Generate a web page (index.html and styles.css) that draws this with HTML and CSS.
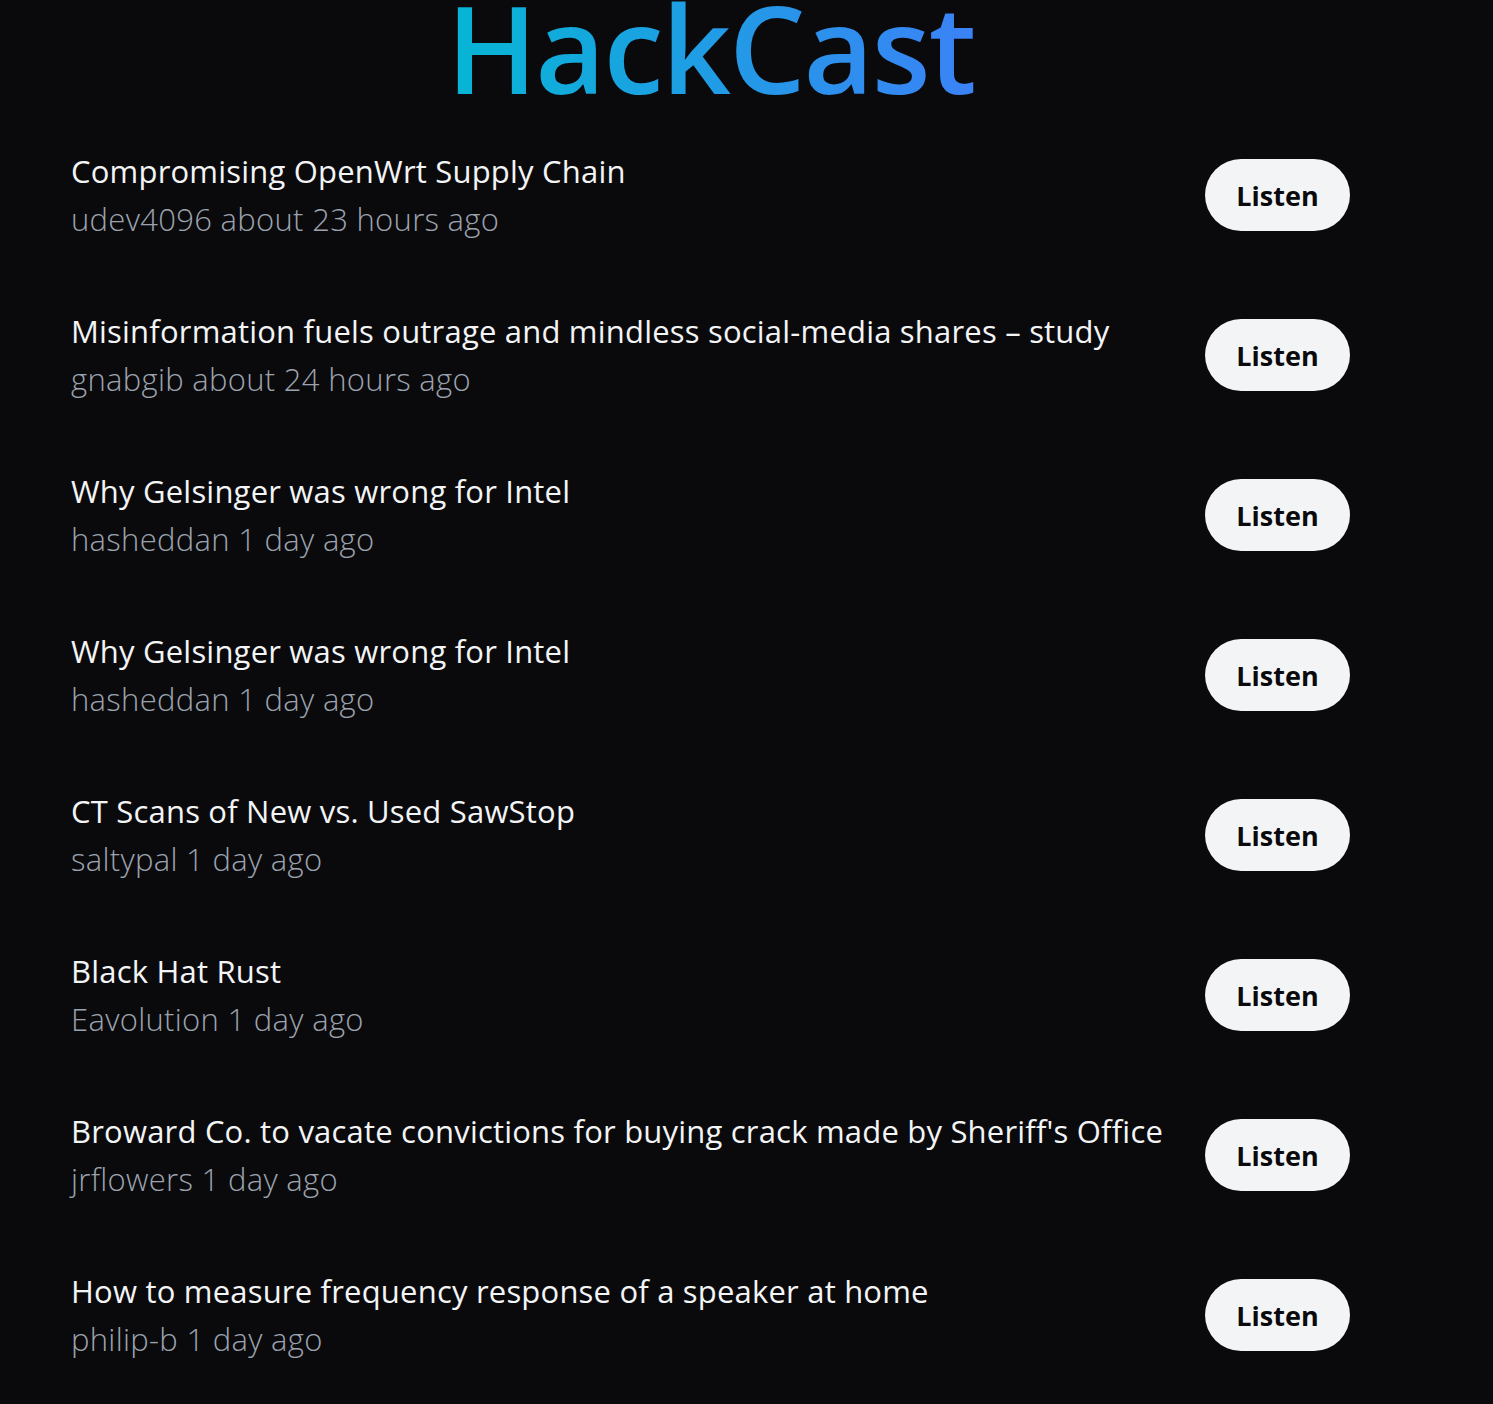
FILE: index.html
```html
<!DOCTYPE html>
<html lang="en">
<head>
<meta charset="utf-8">
<title>HackCast</title>
<link rel="stylesheet" href="styles.css">
</head>
<body>
<main class="page">
  <h1 class="brand"><span class="brand-text">HackCast</span></h1>
  <ul class="list">
    <li class="item">
      <div class="info"><p class="title">Compromising OpenWrt Supply Chain</p><p class="meta">udev4096 about 23 hours ago</p></div>
      <button class="listen">Listen</button>
    </li>
    <li class="item">
      <div class="info"><p class="title">Misinformation fuels outrage and mindless social-media shares – study</p><p class="meta">gnabgib about 24 hours ago</p></div>
      <button class="listen">Listen</button>
    </li>
    <li class="item">
      <div class="info"><p class="title">Why Gelsinger was wrong for Intel</p><p class="meta">hasheddan 1 day ago</p></div>
      <button class="listen">Listen</button>
    </li>
    <li class="item">
      <div class="info"><p class="title">Why Gelsinger was wrong for Intel</p><p class="meta">hasheddan 1 day ago</p></div>
      <button class="listen">Listen</button>
    </li>
    <li class="item">
      <div class="info"><p class="title">CT Scans of New vs. Used SawStop</p><p class="meta">saltypal 1 day ago</p></div>
      <button class="listen">Listen</button>
    </li>
    <li class="item">
      <div class="info"><p class="title">Black Hat Rust</p><p class="meta">Eavolution 1 day ago</p></div>
      <button class="listen">Listen</button>
    </li>
    <li class="item">
      <div class="info"><p class="title">Broward Co. to vacate convictions for buying crack made by Sheriff's Office</p><p class="meta">jrflowers 1 day ago</p></div>
      <button class="listen">Listen</button>
    </li>
    <li class="item">
      <div class="info"><p class="title">How to measure frequency response of a speaker at home</p><p class="meta">philip-b 1 day ago</p></div>
      <button class="listen">Listen</button>
    </li>
  </ul>
</main>
</body>
</html>
```
FILE: styles.css
```css
* { box-sizing: border-box; }
html, body {
  margin: 0;
  padding: 0;
  background: #0a0a0c;
  overflow: hidden;
}
body {
  font-family: "Open Sans", "Noto Sans", sans-serif;
  color: #f3f4f6;
}
.page {
  width: 1279px;
  margin-left: 71px;
}
.brand {
  margin: 0;
  font-size: 121px;
  line-height: 94px;
  font-weight: 600;
  text-align: center;
  letter-spacing: -2px;
}
.brand-text {
  background: linear-gradient(to right, #06b6d4, #3b82f6);
  -webkit-background-clip: text;
  background-clip: text;
  color: transparent;
}
.list {
  list-style: none;
  margin: 53px 0 0 0;
  padding: 0;
  display: flex;
  flex-direction: column;
  gap: 64px;
}
.item {
  display: flex;
  align-items: center;
  justify-content: space-between;
  height: 96px;
}
.info p { margin: 0; }
.title {
  font-size: 31px;
  line-height: 48px;
  font-weight: 400;
  color: #f3f4f6;
  letter-spacing: 0.2px;
}
.meta {
  font-size: 31px;
  line-height: 48px;
  font-weight: 300;
  color: #9ca3af;
  letter-spacing: 0.3px;
}
.listen {
  width: 145px;
  height: 72px;
  border: 0;
  border-radius: 36px;
  background: #f3f4f6;
  color: #0a0a0c;
  font-family: inherit;
  font-size: 27px;
  font-weight: 700;
  padding: 0;
  cursor: pointer;
}
```
